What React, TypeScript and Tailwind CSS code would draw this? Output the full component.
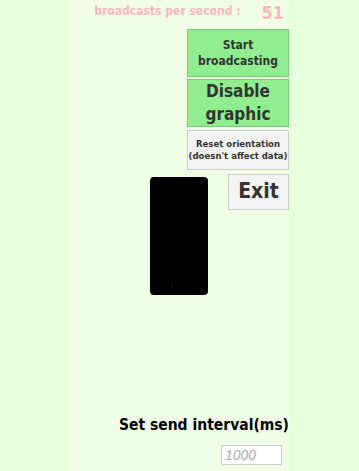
import React from 'react';

const font = { fontFamily: '"DejaVu Sans Condensed", "DejaVu Sans", sans-serif' };

export default function App() {
  return (
    <div className="min-h-screen bg-[#e6fedb]" style={font}>
      <div className="ml-[69px] flex h-[471px] w-[220px] flex-col bg-[#f0fee6]">
        {/* stats */}
        <div className="flex h-[29px] items-start justify-end gap-[21px] pr-[5px] font-bold text-[#ffb6c1]">
          <span className="mt-[3px] text-[12px] leading-[16px]">broadcasts per second :</span>
          <span className="mt-[1px] text-[18px] leading-[24px]">51</span>
        </div>

        {/* controls */}
        <div className="flex flex-col items-end">
          <button className="h-[48px] w-[102px] border border-[#78cf78] bg-[#90ee90] text-[12px] font-bold leading-[16px] text-[#333]">
            Start
            <br />
            broadcasting
          </button>
          <button className="mt-[2px] h-[48px] w-[102px] border border-[#78cf78] bg-[#90ee90] text-[17px] font-bold leading-[23px] text-[#333]">
            Disable
            <br />
            graphic
          </button>
          <button className="mt-[3px] h-[40px] w-[102px] border border-[#cccccc] bg-[#f3f3f3] text-[9.5px] font-bold leading-[12px] text-[#333]">
            Reset orientation
            <br />
            (doesn't affect data)
          </button>
        </div>

        <div className="mt-[4px] flex items-start justify-end gap-[20px]">
          <div className="relative mt-[3px] h-[118px] w-[58px] rounded-[4px] bg-black">
            <span className="absolute left-[22px] top-[109px] h-[1px] w-[1px] bg-[#444]" />
          </div>
          <button className="h-[36px] w-[61px] border border-[#cccccc] bg-[#f3f3f3] text-[21px] font-bold text-[#333]">
            Exit
          </button>
        </div>

        {/* interval */}
        <div className="mt-auto flex flex-col items-end pb-[6px]">
          <span className="text-[15.5px] font-bold leading-[20px] text-black">Set send interval(ms)</span>
          <input
            placeholder="1000"
            className="mr-[7px] mt-[10px] h-[20px] w-[61px] border border-[#cccccc] bg-white px-[3px] text-[14px] italic text-[#333] placeholder:text-[#aaa]"
            style={{ fontFamily: '"Liberation Sans", Arial, sans-serif' }}
          />
        </div>
      </div>
    </div>
  );
}
